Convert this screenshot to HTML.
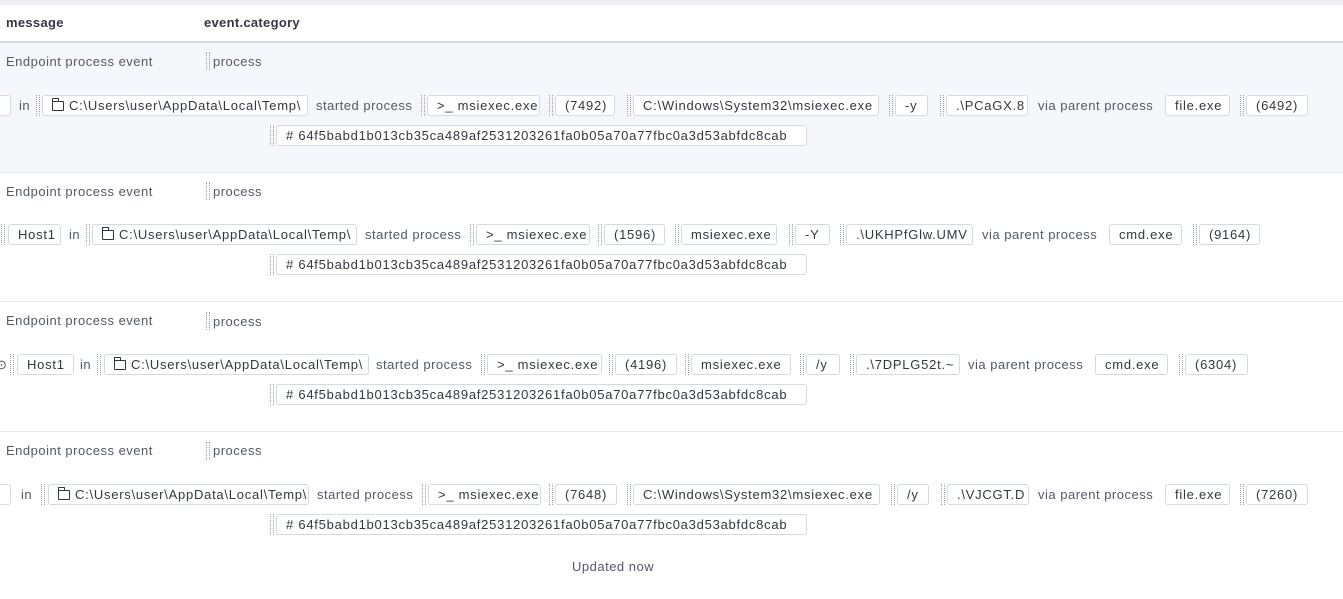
<!DOCTYPE html>
<html><head><meta charset="utf-8"><style>
*{margin:0;padding:0;box-sizing:border-box}
body{width:1343px;height:599px;overflow:hidden;background:#fff;font-family:"Liberation Sans",sans-serif;font-size:13px;color:#343741;position:relative;letter-spacing:.5px}
.a{position:absolute;white-space:nowrap}
.b{position:absolute;height:21px;border:1px solid #d3dae6;border-radius:3px;background:#fff;line-height:20px;padding-left:9px;white-space:nowrap;overflow:hidden;color:#343741;letter-spacing:.75px}
.h{position:absolute;width:4px;height:21px;border-left:1px dotted #9aa0a8;border-right:1px dotted #9aa0a8}
.t{position:absolute;white-space:nowrap;color:#535966;line-height:22px}
.row{position:absolute;left:0;width:1343px;border-top:1px solid #e3e8ef}
.f{display:inline-block;width:12px;height:10px;border:1.3px solid #343741;border-radius:1px;margin-right:5px;vertical-align:-1px;position:relative}
.f:before{content:"";position:absolute;left:-1px;top:-4px;width:5px;height:3px;border:1.3px solid #343741;border-bottom:none;border-radius:1px 1px 0 0}
</style></head><body>
<div class="a" style="left:0;top:0;width:1343px;height:5px;background:#eef0f3"></div>
<div class="a" style="left:6px;top:15px;font-weight:bold;color:#343741;letter-spacing:.3px">message</div>
<div class="a" style="left:204px;top:15px;font-weight:bold;color:#343741;letter-spacing:.3px">event.category</div>
<div class="row" style="top:41px;height:131px;background:#f5f7fa;border-top:2px solid #d3dae6"></div>
<div class="row" style="top:172px;height:129px"></div>
<div class="row" style="top:301px;height:130px"></div>
<div class="row" style="top:431px;height:110px"></div>

<!-- row 1 -->
<div class="t" style="left:6px;top:51px">Endpoint process event</div>
<div class="h" style="left:206px;top:52px;height:18px"></div><div class="t" style="left:213px;top:51px">process</div>
<div class="b" style="left:-20px;top:95px;width:31px"></div>
<div class="t" style="left:19px;top:95px">in</div>
<div class="h" style="left:36px;top:95px"></div><div class="b" style="left:42px;top:95px;width:266px"><span class="f"></span>C:\Users\user\AppData\Local\Temp\</div>
<div class="t" style="left:316px;top:95px">started process</div>
<div class="h" style="left:421px;top:95px"></div><div class="b" style="left:427px;top:95px;width:113px">&gt;_ msiexec.exe</div>
<div class="h" style="left:549px;top:95px"></div><div class="b" style="left:555px;top:95px;width:60px">(7492)</div>
<div class="h" style="left:627px;top:95px"></div><div class="b" style="left:633px;top:95px;width:246px">C:\Windows\System32\msiexec.exe</div>
<div class="h" style="left:889px;top:95px"></div><div class="b" style="left:895px;top:95px;width:33px">-y</div>
<div class="h" style="left:940px;top:95px"></div><div class="b" style="left:946px;top:95px;width:82px">.\PCaGX.8</div>
<div class="t" style="left:1038px;top:95px">via parent process</div>
<div class="b" style="left:1165px;top:95px;width:65px">file.exe</div>
<div class="h" style="left:1240px;top:95px"></div><div class="b" style="left:1246px;top:95px;width:62px">(6492)</div>
<div class="h" style="left:270px;top:125px"></div><div class="b" style="left:276px;top:125px;width:531px"># 64f5babd1b013cb35ca489af2531203261fa0b05a70a77fbc0a3d53abfdc8cab</div>

<!-- row 2 -->
<div class="t" style="left:6px;top:181px">Endpoint process event</div>
<div class="h" style="left:206px;top:182px;height:18px"></div><div class="t" style="left:213px;top:181px">process</div>
<div class="h" style="left:1px;top:224px"></div><div class="b" style="left:8px;top:224px;width:53px">Host1</div>
<div class="t" style="left:69px;top:224px">in</div>
<div class="h" style="left:86px;top:224px"></div><div class="b" style="left:92px;top:224px;width:265px"><span class="f"></span>C:\Users\user\AppData\Local\Temp\</div>
<div class="t" style="left:365px;top:224px">started process</div>
<div class="h" style="left:470px;top:224px"></div><div class="b" style="left:476px;top:224px;width:114px">&gt;_ msiexec.exe</div>
<div class="h" style="left:598px;top:224px"></div><div class="b" style="left:604px;top:224px;width:61px">(1596)</div>
<div class="h" style="left:675px;top:224px"></div><div class="b" style="left:681px;top:224px;width:96px">msiexec.exe</div>
<div class="h" style="left:789px;top:224px"></div><div class="b" style="left:795px;top:224px;width:35px">-Y</div>
<div class="h" style="left:840px;top:224px"></div><div class="b" style="left:846px;top:224px;width:127px">.\UKHPfGlw.UMV</div>
<div class="t" style="left:982px;top:224px">via parent process</div>
<div class="b" style="left:1109px;top:224px;width:73px">cmd.exe</div>
<div class="h" style="left:1193px;top:224px"></div><div class="b" style="left:1199px;top:224px;width:61px">(9164)</div>
<div class="h" style="left:270px;top:254px"></div><div class="b" style="left:276px;top:254px;width:531px"># 64f5babd1b013cb35ca489af2531203261fa0b05a70a77fbc0a3d53abfdc8cab</div>

<!-- row 3 -->
<div class="t" style="left:6px;top:310px">Endpoint process event</div>
<div class="h" style="left:206px;top:312px;height:18px"></div><div class="t" style="left:213px;top:311px">process</div>
<div class="t" style="left:-4px;top:354px">⊙</div>
<div class="h" style="left:10px;top:354px"></div><div class="b" style="left:17px;top:354px;width:57px">Host1</div>
<div class="t" style="left:80px;top:354px">in</div>
<div class="h" style="left:97px;top:354px"></div><div class="b" style="left:104px;top:354px;width:265px"><span class="f"></span>C:\Users\user\AppData\Local\Temp\</div>
<div class="t" style="left:376px;top:354px">started process</div>
<div class="h" style="left:481px;top:354px"></div><div class="b" style="left:487px;top:354px;width:115px">&gt;_ msiexec.exe</div>
<div class="h" style="left:609px;top:354px"></div><div class="b" style="left:615px;top:354px;width:62px">(4196)</div>
<div class="h" style="left:685px;top:354px"></div><div class="b" style="left:691px;top:354px;width:100px">msiexec.exe</div>
<div class="h" style="left:800px;top:354px"></div><div class="b" style="left:806px;top:354px;width:34px">/y</div>
<div class="h" style="left:850px;top:354px"></div><div class="b" style="left:856px;top:354px;width:104px">.\7DPLG52t.~</div>
<div class="t" style="left:968px;top:354px">via parent process</div>
<div class="b" style="left:1095px;top:354px;width:73px">cmd.exe</div>
<div class="h" style="left:1179px;top:354px"></div><div class="b" style="left:1185px;top:354px;width:63px">(6304)</div>
<div class="h" style="left:270px;top:384px"></div><div class="b" style="left:276px;top:384px;width:531px"># 64f5babd1b013cb35ca489af2531203261fa0b05a70a77fbc0a3d53abfdc8cab</div>

<!-- row 4 -->
<div class="t" style="left:6px;top:440px">Endpoint process event</div>
<div class="h" style="left:206px;top:442px;height:18px"></div><div class="t" style="left:213px;top:440px">process</div>
<div class="b" style="left:-20px;top:484px;width:31px"></div>
<div class="t" style="left:21px;top:484px">in</div>
<div class="h" style="left:41px;top:484px"></div><div class="b" style="left:48px;top:484px;width:261px"><span class="f"></span>C:\Users\user\AppData\Local\Temp\</div>
<div class="t" style="left:317px;top:484px">started process</div>
<div class="h" style="left:422px;top:484px"></div><div class="b" style="left:428px;top:484px;width:113px">&gt;_ msiexec.exe</div>
<div class="h" style="left:549px;top:484px"></div><div class="b" style="left:555px;top:484px;width:62px">(7648)</div>
<div class="h" style="left:627px;top:484px"></div><div class="b" style="left:633px;top:484px;width:247px">C:\Windows\System32\msiexec.exe</div>
<div class="h" style="left:891px;top:484px"></div><div class="b" style="left:897px;top:484px;width:32px">/y</div>
<div class="h" style="left:941px;top:484px"></div><div class="b" style="left:947px;top:484px;width:82px">.\VJCGT.D</div>
<div class="t" style="left:1038px;top:484px">via parent process</div>
<div class="b" style="left:1165px;top:484px;width:65px">file.exe</div>
<div class="h" style="left:1240px;top:484px"></div><div class="b" style="left:1246px;top:484px;width:62px">(7260)</div>
<div class="h" style="left:270px;top:514px"></div><div class="b" style="left:276px;top:514px;width:531px"># 64f5babd1b013cb35ca489af2531203261fa0b05a70a77fbc0a3d53abfdc8cab</div>

<div class="t" style="left:572px;top:556px">Updated now</div>
</body></html>
